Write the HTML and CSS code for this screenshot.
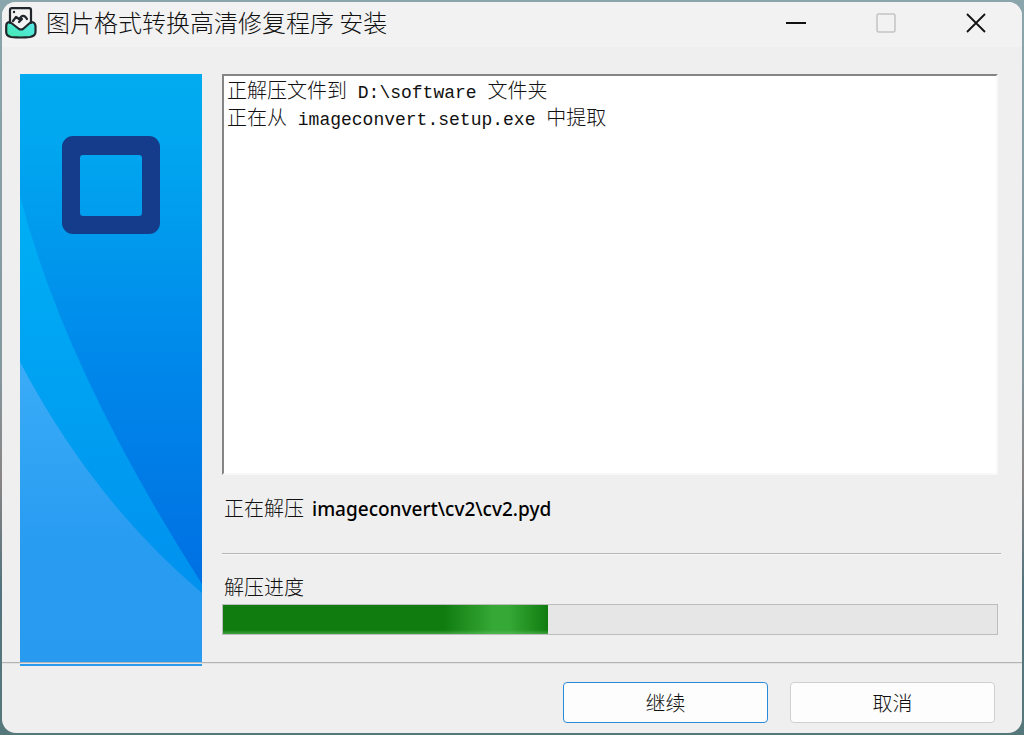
FILE: index.html
```
<!DOCTYPE html>
<html lang="zh-CN">
<head>
    <meta charset="UTF-8">
    <meta name="viewport" content="width=device-width, initial-scale=1.0">
    <title>图片格式转换高清修复程序 安装</title>
    <link rel="stylesheet" href="styles.css">
</head>
<body>
    <div class="window">
        <header class="titlebar">
            <svg class="app-icon" viewBox="0 0 32 32" aria-hidden="true">
                <defs>
                    <linearGradient id="mail" x1="0" y1="1" x2="1" y2="0">
                        <stop offset="0" stop-color="#43e8ad"/>
                        <stop offset="1" stop-color="#59e8ee"/>
                    </linearGradient>
                </defs>
                <path d="M5 15 Q1 15 1 19 V25 Q1 29 6 30 Q16 31 25 30 Q30 29 30 25 V19 Q30 15 26 15 L18 22 Q16 23 14 22 Z" fill="url(#mail)"/>
                <path d="M5 16 V3 Q5 1 7 1 H24 Q26 1 26 3 V16 L18 22 Q16 23 14 22 Z" fill="#f3f3f3"/>
                <g fill="none" stroke="#20262c" stroke-width="2.2" stroke-linecap="round" stroke-linejoin="round">
                    <path d="M5 16 V3 Q5 1.2 7 1.2 H24 Q26 1.2 26 3 V16"/>
                    <path d="M5 15 Q1.2 15 1.2 19 V25 Q1.2 29 6 30 Q16 31 25 30 Q30.5 29 30.5 25 V19 Q30 15 26 15 L18 22 Q16 23 14 22 Z"/>
                    <path d="M8 14 L11 10 L14 12 L17 9 Q20 8 22 12 M14 15 L17 12"/>
                </g>
                <circle cx="9" cy="5" r="1.2" fill="#20262c"/>
            </svg>
            <h1 class="title">图片格式转换高清修复程序 安装</h1>
            <button class="win-btn" type="button" aria-label="最小化">
                <svg viewBox="0 0 20 20"><path d="M0 10 H20" stroke-width="2"/></svg>
            </button>
            <button class="win-btn" type="button" aria-label="最大化" disabled>
                <svg viewBox="0 0 20 20"><rect x="1" y="1" width="18" height="18" rx="2" stroke-width="1.5"/></svg>
            </button>
            <button class="win-btn" type="button" aria-label="关闭">
                <svg viewBox="0 0 20 20"><path d="M1 1 L19 19 M19 1 L1 19" stroke-width="1.8"/></svg>
            </button>
        </header>

        <main class="content">
            <svg class="banner" viewBox="0 0 182 592" preserveAspectRatio="none" aria-hidden="true">
                <defs>
                    <linearGradient id="back" x1="0" y1="0" x2="0" y2="1">
                        <stop offset="0" stop-color="#02abf0"/>
                        <stop offset="0.1" stop-color="#01a8f0"/>
                        <stop offset="0.5" stop-color="#0087ea"/>
                        <stop offset="0.87" stop-color="#006fe2"/>
                    </linearGradient>
                    <linearGradient id="middle" x1="0" y1="0" x2="0" y2="1">
                        <stop offset="0" stop-color="#00b0f5"/>
                        <stop offset="1" stop-color="#008bed"/>
                    </linearGradient>
                    <linearGradient id="front" x1="0" y1="0" x2="0" y2="1">
                        <stop offset="0" stop-color="#3aacf7"/>
                        <stop offset="0.6" stop-color="#289cf1"/>
                        <stop offset="1" stop-color="#289bf1"/>
                    </linearGradient>
                </defs>
                <rect width="182" height="592" fill="url(#back)"/>
                <path d="M0 122 Q45 296 182 510 V592 H0 Z" fill="url(#middle)"/>
                <path d="M0 288 Q73 427 182 519 V592 H0 Z" fill="url(#front)"/>
                <path fill="#143c8a" fill-rule="evenodd" d="M53 62 H129 A11 11 0 0 1 140 73 V149 A11 11 0 0 1 129 160 H53 A11 11 0 0 1 42 149 V73 A11 11 0 0 1 53 62 Z M63 81 A3 3 0 0 0 60 84 V139 A3 3 0 0 0 63 142 H119 A3 3 0 0 0 122 139 V84 A3 3 0 0 0 119 81 Z"/>
            </svg>

            <section class="panel">
                <div class="log" role="log">
                    <p>正解压文件到<span class="path"> D:\software </span>文件夹</p>
                    <p>正在从<span class="path"> imageconvert.setup.exe </span>中提取</p>
                </div>
                <p class="status">正在解压 <span class="file">imageconvert\cv2\cv2.pyd</span></p>
                <hr class="line">
                <label class="caption" for="progress">解压进度</label>
                <progress class="progress" id="progress" value="42" max="100"></progress>
            </section>
        </main>

        <footer class="actions">
            <button class="btn btn-default" type="button">继续</button>
            <button class="btn" type="button">取消</button>
        </footer>
    </div>
</body>
</html>
```
FILE: styles.css
```
* {
    box-sizing: border-box;
}
body {
    margin: 0;
    padding: 2px;
    min-height: 100vh;
    display: flex;
    font-family: "Noto Sans", "Noto Sans CJK SC", sans-serif;
    font-size: 20px;
    line-height: 30px;
    color: #111;
    background: linear-gradient(#8aa5ac, #83979f 50%, #8a8585 65%, #52737e 80%, #56787b);
}
p {
    margin: 0;
}
.window {
    flex: 1;
    display: flex;
    flex-direction: column;
    background: #efefef;
    border-radius: 14px;
    overflow: hidden;
}

/* 标题栏 */
.titlebar {
    display: flex;
    align-items: center;
    height: 45px;
    padding: 0 1px 3px 3px;
    background: #f2f2f2;
}
.app-icon {
    width: 32px;
    height: 32px;
}
.title {
    flex: 1;
    margin: 0 0 0 9px;
    padding-bottom: 3px;
    font-family: "Noto Sans CJK SC", sans-serif;
    font-size: 24px;
    font-weight: 300;
}
.win-btn {
    width: 90px;
    height: 42px;
    padding: 0;
    border: none;
    background: none;
    color: #111;
}
.win-btn:disabled {
    color: #c3c3c3;
}
.win-btn svg {
    display: block;
    width: 20px;
    height: 20px;
    margin: 0 auto;
    fill: none;
    stroke: currentColor;
}

/* 主体 */
.content {
    flex: 1;
    display: flex;
    gap: 20px;
    padding: 27px 21px 27px 18px;
}
.banner {
    width: 182px;
    height: auto;
    margin-bottom: -31px;
}
.panel {
    flex: 1;
    display: flex;
    flex-direction: column;
    font-family: "Noto Sans CJK SC", sans-serif;
    font-weight: 300;
}
.log {
    flex: 1;
    margin-right: 3px;
    padding: 0 3px;
    line-height: 27px;
    background: #fff;
    border: 2px solid #f8f8f8;
    border-top-color: #858585;
    border-left-color: #858585;
}
.path {
    font-family: "Liberation Mono", monospace;
    font-size: 18px;
    line-height: 18px;
    white-space: pre;
}
.status {
    display: flex;
    align-items: baseline;
    gap: 8px;
    height: 30px;
    margin-top: 18px;
    padding-left: 2px;
}
.file {
    font-family: "Noto Sans", sans-serif;
    font-size: 19px;
    font-weight: 500;
    color: #000;
}
.line {
    width: 100%;
    margin: 30px 0 17px;
    border: none;
    border-top: 1px solid #b5b5b5;
    border-bottom: 1px solid #f8f8f8;
}
.caption {
    margin-bottom: 2px;
    padding-left: 2px;
}
.progress {
    display: block;
    appearance: none;
    height: 31px;
    margin-right: 3px;
    width: auto;
    border: 1px solid #bdbdbd;
    background: #e6e6e6;
}
.progress::-webkit-progress-bar {
    background: #e6e6e6;
}
.progress::-webkit-progress-value {
    background:
        linear-gradient(to top, rgba(110, 200, 110, 0.5), transparent 4px),
        linear-gradient(to right, #107c10 68%, #35a835 83%, #35a835 88%, #107c10);
}

/* 底部按钮 */
.actions {
    position: relative;
    display: flex;
    justify-content: flex-end;
    gap: 22px;
    padding: 19px 27px 10px;
    border-top: 1px solid #b5b5b5;
    box-shadow: inset 0 1px #e2e2e2;
}
.btn {
    width: 205px;
    height: 41px;
    padding: 0;
    font-family: "Noto Sans CJK SC", sans-serif;
    font-size: 20px;
    font-weight: 300;
    color: #111;
    background: #fdfdfd;
    border: 1px solid #d0d0d0;
    border-radius: 4px;
}
.btn-default {
    border-color: #2a8ad8;
}
```
